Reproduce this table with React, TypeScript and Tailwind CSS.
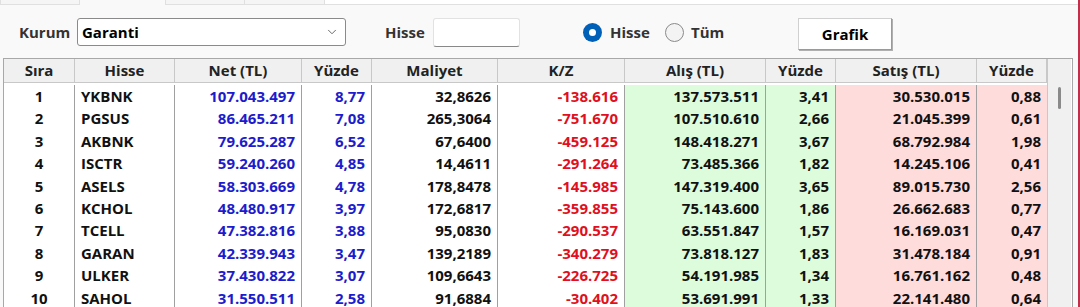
import { ChevronDown } from 'lucide-react';

type Row = {
  sira: number;
  hisse: string;
  net: string;
  netPct: string;
  maliyet: string;
  kz: string;
  alis: string;
  alisPct: string;
  satis: string;
  satisPct: string;
};

const rows: Row[] = [
  { sira: 1, hisse: 'YKBNK', net: '107.043.497', netPct: '8,77', maliyet: '32,8626', kz: '-138.616', alis: '137.573.511', alisPct: '3,41', satis: '30.530.015', satisPct: '0,88' },
  { sira: 2, hisse: 'PGSUS', net: '86.465.211', netPct: '7,08', maliyet: '265,3064', kz: '-751.670', alis: '107.510.610', alisPct: '2,66', satis: '21.045.399', satisPct: '0,61' },
  { sira: 3, hisse: 'AKBNK', net: '79.625.287', netPct: '6,52', maliyet: '67,6400', kz: '-459.125', alis: '148.418.271', alisPct: '3,67', satis: '68.792.984', satisPct: '1,98' },
  { sira: 4, hisse: 'ISCTR', net: '59.240.260', netPct: '4,85', maliyet: '14,4611', kz: '-291.264', alis: '73.485.366', alisPct: '1,82', satis: '14.245.106', satisPct: '0,41' },
  { sira: 5, hisse: 'ASELS', net: '58.303.669', netPct: '4,78', maliyet: '178,8478', kz: '-145.985', alis: '147.319.400', alisPct: '3,65', satis: '89.015.730', satisPct: '2,56' },
  { sira: 6, hisse: 'KCHOL', net: '48.480.917', netPct: '3,97', maliyet: '172,6817', kz: '-359.855', alis: '75.143.600', alisPct: '1,86', satis: '26.662.683', satisPct: '0,77' },
  { sira: 7, hisse: 'TCELL', net: '47.382.816', netPct: '3,88', maliyet: '95,0830', kz: '-290.537', alis: '63.551.847', alisPct: '1,57', satis: '16.169.031', satisPct: '0,47' },
  { sira: 8, hisse: 'GARAN', net: '42.339.943', netPct: '3,47', maliyet: '139,2189', kz: '-340.279', alis: '73.818.127', alisPct: '1,83', satis: '31.478.184', satisPct: '0,91' },
  { sira: 9, hisse: 'ULKER', net: '37.430.822', netPct: '3,07', maliyet: '109,6643', kz: '-226.725', alis: '54.191.985', alisPct: '1,34', satis: '16.761.162', satisPct: '0,48' },
  { sira: 10, hisse: 'SAHOL', net: '31.550.511', netPct: '2,58', maliyet: '91,6884', kz: '-30.402', alis: '53.691.991', alisPct: '1,33', satis: '22.141.480', satisPct: '0,64' },
];

const cols = 'grid grid-cols-[71px_100px_127px_70px_126px_127px_141px_70px_141px_70px]';
const headers = ['Sıra', 'Hisse', 'Net (TL)', 'Yüzde', 'Maliyet', 'K/Z', 'Alış (TL)', 'Yüzde', 'Satış (TL)', 'Yüzde'];

export default function App() {
  return (
    <div className="relative w-[1080px] h-[307px] overflow-hidden bg-[#f9f9f9] text-[15px] font-bold text-[#111] [font-family:'Open_Sans','Noto_Sans',sans-serif]">
      {/* tab strip remnants */}
      <div className="flex h-[5px]">
        <div className="w-[80px] border border-t-0 border-[#e0e0e0] bg-[#f5f5f5]" />
        <div className="w-[85px]" />
        <div className="w-[80px] border border-t-0 border-[#e0e0e0] bg-[#f5f5f5]" />
        <div className="w-[80px] border border-t-0 border-l-0 border-[#e0e0e0] bg-[#f5f5f5]" />
        <div className="flex-1 border-b border-[#e0e0e0] bg-white" />
      </div>
      <div className="absolute right-0 top-0 h-full w-[2px] bg-[#c0304a]" />

      {/* toolbar */}
      <div className="flex items-center h-[45px] pt-[9px]">
        <span className="w-[77px] pl-[19px] text-[#333]">Kurum</span>
        <div className="flex h-[28px] w-[269px] items-center justify-between rounded-[3px] border border-[#8a8a8a] bg-white pl-[4px] pr-[6px]">
          <span className="text-black">Garanti</span>
          <ChevronDown className="h-[14px] w-[14px] text-[#555]" strokeWidth={1.5} />
        </div>
        <span className="w-[87px] pl-[39px] text-[#333]">Hisse</span>
        <div className="h-[29px] w-[87px] rounded-[3px] border border-[#e2e2e2] border-b-[#888] bg-white" />
        <div className="ml-[63px] flex w-[82px] items-center gap-[8px]">
          <span className="flex h-[19px] w-[19px] items-center justify-center rounded-full bg-[#0060b8]">
            <span className="h-[7px] w-[7px] rounded-full bg-white" />
          </span>
          <span className="text-[#333]">Hisse</span>
        </div>
        <div className="flex w-[133px] items-center gap-[7px]">
          <span className="h-[19px] w-[19px] rounded-full border border-[#8a8a8a] bg-[#f3f3f3]" />
          <span className="text-[#333]">Tüm</span>
        </div>
        <button className="mt-[4px] h-[32px] w-[94px] border border-[#d0d0d0] border-b-[#9a9a9a] border-r-[#9a9a9a] bg-white text-black shadow-[1px_1px_0_#b0b0b0]">
          Grafik
        </button>
      </div>

      {/* grid */}
      <div className="ml-[3px] mt-[8px] flex w-[1070px] border border-[#a8a8a8] bg-white">
        <div>
          <div className={`${cols} h-[24px] bg-[#f0f0f0] border-b border-[#c8c8c8]`}>
            {headers.map((h, i) => (
              <div key={i} className="flex items-center justify-center border-r border-[#c8c8c8] text-[#222]">
                {h}
              </div>
            ))}
          </div>
          <div className="pt-[2px]">
            {rows.map((r) => (
              <div key={r.sira} className={`${cols} h-[22.4px] leading-[22px]`}>
                <div className="border-r border-[#a0a0a0] text-center">{r.sira}</div>
                <div className="border-r border-[#a0a0a0] pl-[6px]">{r.hisse}</div>
                <div className="border-r border-[#a0a0a0] pr-[6px] text-right text-[#1c1ccc]">{r.net}</div>
                <div className="border-r border-[#a0a0a0] pr-[6px] text-right text-[#1c1ccc]">{r.netPct}</div>
                <div className="border-r border-[#a0a0a0] pr-[6px] text-right">{r.maliyet}</div>
                <div className="border-r border-[#a0a0a0] pr-[6px] text-right text-[#e01020]">{r.kz}</div>
                <div className="border-r border-[#a0a0a0] bg-[#dcfcdc] pr-[6px] text-right">{r.alis}</div>
                <div className="border-r border-[#a0a0a0] bg-[#dcfcdc] pr-[6px] text-right">{r.alisPct}</div>
                <div className="border-r border-[#a0a0a0] bg-[#ffdcdc] pr-[6px] text-right">{r.satis}</div>
                <div className="bg-[#ffdcdc] pr-[6px] text-right">{r.satisPct}</div>
              </div>
            ))}
          </div>
        </div>
        {/* scrollbar */}
        <div className="w-[24px] border-l border-[#c8c8c8] bg-[#f0f0f0] flex justify-center">
          <div className="mt-[28px] h-[22px] w-[3px] rounded bg-[#8a8a8a]" />
        </div>
      </div>
    </div>
  );
}
